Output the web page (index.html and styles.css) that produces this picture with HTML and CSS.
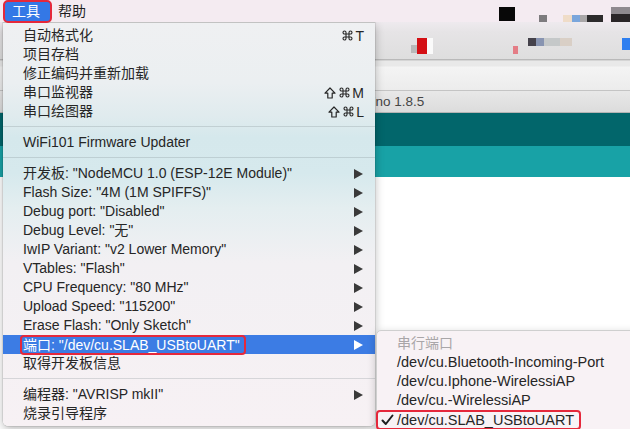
FILE: index.html
```html
<!DOCTYPE html>
<html lang="zh">
<head>
<meta charset="utf-8">
<title>工具菜单</title>
<link rel="stylesheet" href="styles.css">
</head>
<body>
<div class="screen">
  <div class="menubar">
    <span class="mb-item active">工具</span>
    <span class="mb-item">帮助</span>
    <div class="mb-blur">
      <i class="bk b-black"></i>
      <i class="bk b-gray1"></i>
      <i class="bk b-beige"></i>
      <i class="bk b-blue"></i>
      <i class="bk b-gray2"></i>
      <i class="bk b-dark"></i>
      <i class="bk b-dark2"></i>
    </div>
  </div>
  <div class="window">
    <div class="tabstrip">
      <div class="tab-blur">
        <i class="tb t-gray"></i>
        <i class="tb t-red"></i>
        <i class="tb t-white"></i>
        <i class="tb t-pink"></i>
        <i class="tb t-mix"></i>
        <i class="tb t-blue"></i>
      </div>
    </div>
    <div class="toolbar"></div>
    <div class="titlebar"><span>Arduino 1.8.5</span></div>
    <div class="teal-dark"></div>
    <div class="teal"></div>
    <div class="editor"></div>
  </div>

  <div class="menu">
    <div class="row"><span class="label">自动格式化</span><svg class="cmd" width="11" height="11" viewBox="-0.5 -0.5 11 11"><path d="M3.5 3.5 V2 A1.5 1.5 0 1 0 2 3.5 H8 A1.5 1.5 0 1 0 6.5 2 V8 A1.5 1.5 0 1 0 8 6.5 H2 A1.5 1.5 0 1 0 3.5 8 Z" fill="none" stroke="#262626" stroke-width="1.1"/></svg><span class="key">T</span></div>
    <div class="row"><span class="label">项目存档</span></div>
    <div class="row"><span class="label">修正编码并重新加载</span></div>
    <div class="row"><span class="label">串口监视器</span><svg class="shift" width="12" height="12" viewBox="0 0 12 12"><path d="M6 1 L11 6.2 H8.2 V11 H3.8 V6.2 H1 Z" fill="none" stroke="#262626" stroke-width="1.2" stroke-linejoin="round"/></svg><svg class="cmd" width="11" height="11" viewBox="-0.5 -0.5 11 11"><path d="M3.5 3.5 V2 A1.5 1.5 0 1 0 2 3.5 H8 A1.5 1.5 0 1 0 6.5 2 V8 A1.5 1.5 0 1 0 8 6.5 H2 A1.5 1.5 0 1 0 3.5 8 Z" fill="none" stroke="#262626" stroke-width="1.1"/></svg><span class="key">M</span></div>
    <div class="row"><span class="label">串口绘图器</span><svg class="shift" width="12" height="12" viewBox="0 0 12 12"><path d="M6 1 L11 6.2 H8.2 V11 H3.8 V6.2 H1 Z" fill="none" stroke="#262626" stroke-width="1.2" stroke-linejoin="round"/></svg><svg class="cmd" width="11" height="11" viewBox="-0.5 -0.5 11 11"><path d="M3.5 3.5 V2 A1.5 1.5 0 1 0 2 3.5 H8 A1.5 1.5 0 1 0 6.5 2 V8 A1.5 1.5 0 1 0 8 6.5 H2 A1.5 1.5 0 1 0 3.5 8 Z" fill="none" stroke="#262626" stroke-width="1.1"/></svg><span class="key">L</span></div>
    <div class="sep"></div>
    <div class="row"><span class="label">WiFi101 Firmware Updater</span></div>
    <div class="sep"></div>
    <div class="row"><span class="label">开发板: "NodeMCU 1.0 (ESP-12E Module)"</span><span class="arrow"></span></div>
    <div class="row"><span class="label">Flash Size: "4M (1M SPIFFS)"</span><span class="arrow"></span></div>
    <div class="row"><span class="label">Debug port: "Disabled"</span><span class="arrow"></span></div>
    <div class="row"><span class="label">Debug Level: "无"</span><span class="arrow"></span></div>
    <div class="row"><span class="label">IwIP Variant: "v2 Lower Memory"</span><span class="arrow"></span></div>
    <div class="row"><span class="label">VTables: "Flash"</span><span class="arrow"></span></div>
    <div class="row"><span class="label">CPU Frequency: "80 MHz"</span><span class="arrow"></span></div>
    <div class="row"><span class="label">Upload Speed: "115200"</span><span class="arrow"></span></div>
    <div class="row"><span class="label">Erase Flash: "Only Sketch"</span><span class="arrow"></span></div>
    <div class="row selected"><span class="label marked">端口: "/dev/cu.SLAB_USBtoUART"</span><span class="arrow"></span></div>
    <div class="row"><span class="label">取得开发板信息</span></div>
    <div class="sep"></div>
    <div class="row"><span class="label">编程器: "AVRISP mkII"</span><span class="arrow"></span></div>
    <div class="row"><span class="label">烧录引导程序</span></div>
  </div>

  <div class="submenu">
    <div class="srow header">串行端口</div>
    <div class="srow">/dev/cu.Bluetooth-Incoming-Port</div>
    <div class="srow">/dev/cu.Iphone-WirelessiAP</div>
    <div class="srow">/dev/cu.-WirelessiAP</div>
    <div class="srow checked">
      <span class="sel">
        <span class="check"><svg width="13" height="12" viewBox="0 0 13 12"><path d="M1.5 6.5 L4.8 10 L11.5 1.5" fill="none" stroke="#1e1e1e" stroke-width="2" stroke-linecap="round" stroke-linejoin="round"/></svg></span>
        <span>/dev/cu.SLAB_USBtoUART</span>
      </span>
    </div>
  </div>
</div>
</body>
</html>
```
FILE: styles.css
```css
* { box-sizing: border-box; }

html, body {
  margin: 0;
  padding: 0;
  background: #ffffff;
}

.screen {
  position: relative;
  width: 630px;
  height: 429px;
  overflow: hidden;
  font-family: "Liberation Sans", "Noto Sans CJK SC", sans-serif;
  font-size: 14px;
  color: #262626;
}

/* ---------- macOS menubar ---------- */
.menubar {
  position: relative;
  z-index: 3;
  height: 22px;
  display: flex;
  align-items: flex-start;
  background: #f4ebf1;
}

.mb-item {
  height: 22px;
  line-height: 22px;
  padding: 0 6px;
  color: #1f1f1f;
}

.mb-item.active {
  height: 23px;
  line-height: 19px;
  margin-left: 3px;
  padding: 0 10px 0 7px;
  border: 2px solid #e5283b;
  border-radius: 5px;
  background: #3478e6;
  color: #ffffff;
}

.mb-blur {
  display: flex;
  margin-left: auto;
  height: 22px;
  align-items: flex-start;
}

.bk { display: block; }
.b-black { width: 16px; height: 14px; margin-top: 7px; background: #080808; margin-right: 24px; }
.b-gray1 { width: 8px; height: 7px; margin-top: 15px; background: #7d7b7e; margin-right: 16px; }
.b-beige { width: 9px; height: 7px; margin-top: 15px; background: #efdcc8; }
.b-blue { width: 8px; height: 7px; margin-top: 15px; background: #7aa6dc; }
.b-gray2 { width: 7px; height: 7px; margin-top: 15px; background: #a9a7a8; }
.b-dark { width: 16px; height: 7px; margin-top: 15px; background: #2c2b2c; margin-right: 8px; }
.b-dark2 { width: 19px; height: 15px; margin-top: 7px; background: linear-gradient(#8f8a8f 50%, #2a2628 50%); }

/* ---------- background window ---------- */
.window {
  display: flex;
  flex-direction: column;
}

.tabstrip {
  height: 38px;
  background: linear-gradient(#eeeaee 0, #e6e4e6 10px, #dedede 100%);
  border-bottom: 1px solid #b9b9b9;
  display: flex;
  justify-content: flex-end;
}

.tab-blur {
  display: flex;
  align-items: flex-start;
  padding-top: 16px;
  width: 255px;
}

.tb { display: block; }
.t-gray { width: 9px; height: 8px; margin-top: 7px; background: #b9b9b9; margin-left: 36px; }
.t-red { width: 15px; height: 16px; background: #d40f14; }
.t-white { width: 8px; height: 16px; background: #fafafa; margin-right: 80px; }
.t-pink { width: 8px; height: 8px; margin-top: 8px; background: #e47d86; margin-right: 10px; }
.t-mix { width: 64px; height: 8px; background: linear-gradient(90deg, #45424b 0 8px, #8894b1 8px 16px, #c5c8c9 16px 32px, #d9cfc6 32px 48px, #a9a9a9 48px 64px); margin-right: 50px; }
.t-blue { width: 12px; height: 12px; background: #2f7ff0; }

.toolbar {
  height: 31px;
  background: linear-gradient(#e9e9e9 0, #e9e9e9 5px, #f4f4f4 6px, #ececec 100%);
  border-bottom: 1px solid #c4c4c4;
  border-top: 1px solid #d5d5d5;
}

.titlebar {
  height: 22px;
  background: linear-gradient(#e8e8e8, #dcdcdc);
  border-bottom: 1px solid #b4b4b4;
  padding-left: 344px;
  font-size: 13.5px;
  line-height: 22px;
  color: #454545;
}

.teal-dark {
  height: 33px;
  background: #02666b;
}

.teal {
  height: 31px;
  background: #18a2a6;
}

.editor {
  flex: 1;
  height: 260px;
  background: #ffffff;
}

/* ---------- dropdown menu ---------- */
.menu {
  position: absolute;
  z-index: 2;
  left: 3px;
  top: 22px;
  width: 372px;
  padding: 3px 0;
  border-top: 1px solid #c2c2c2;
  border-radius: 0 0 5px 5px;
  background: linear-gradient(180deg,
    #eff0f2 0px,
    #ebeff1 60px,
    #e0ebee 92px,
    #d5e8ec 115px,
    #d6e9ed 150px,
    #e4eef0 185px,
    #f2f0f3 240px,
    #f7f1f4 100%);
  box-shadow: 0 3px 10px rgba(0, 0, 0, 0.28), 0 0 0 0.5px rgba(0, 0, 0, 0.15);
}

.row {
  height: 19px;
  display: flex;
  align-items: center;
  padding: 0 11px 0 20px;
  line-height: 19px;
  white-space: nowrap;
}

.label {
  flex: 1;
}

.shift {
  display: block;
  margin-right: 3px;
}

.cmd {
  display: block;
  margin-right: 2px;
}

.key {
  display: block;
  height: 16px;
  line-height: 16px;
  font-size: 14px;
  color: #262626;
}

.arrow {
  width: 0;
  height: 0;
  margin-right: 1px;
  border-left: 9px solid #3a3a3a;
  border-top: 5px solid transparent;
  border-bottom: 5px solid transparent;
}

.sep {
  height: 12px;
  position: relative;
}

.sep::before {
  content: "";
  position: absolute;
  left: 0;
  right: 0;
  top: 5px;
  height: 1px;
  background: rgba(120, 130, 135, 0.25);
}

.row.selected {
  background: #3c7ce4;
  color: #ffffff;
}

.row.selected .arrow {
  border-left-color: #ffffff;
}

.label.marked {
  flex: 0 0 auto;
  height: 20px;
  line-height: 16px;
  margin-left: -3px;
  padding: 0 4px 0 1px;
  border: 2px solid #e5283b;
  border-radius: 4px;
  margin-right: auto;
}

/* ---------- submenu ---------- */
.submenu {
  position: absolute;
  z-index: 2;
  left: 376px;
  top: 330px;
  width: 270px;
  height: 110px;
  padding-top: 3px;
  border-radius: 5px;
  background: #f8f2f5;
  border: 1px solid #cfcfcf;
  box-shadow: 0 3px 10px rgba(0, 0, 0, 0.22);
  font-size: 14.5px;
}

.srow {
  height: 19px;
  line-height: 19px;
  padding-left: 20px;
  white-space: nowrap;
}

.srow.header {
  color: #a9a6a8;
  font-size: 14px;
}

.srow.checked {
  padding-left: 0;
}

.sel {
  display: inline-flex;
  align-items: center;
  height: 20px;
  line-height: 16px;
  margin-left: -1px;
  padding: 0 5px 0 2px;
  border: 2px solid #e5283b;
  border-radius: 4px;
}

.check {
  width: 17px;
  display: flex;
  align-items: center;
  padding-left: 1px;
}
```
